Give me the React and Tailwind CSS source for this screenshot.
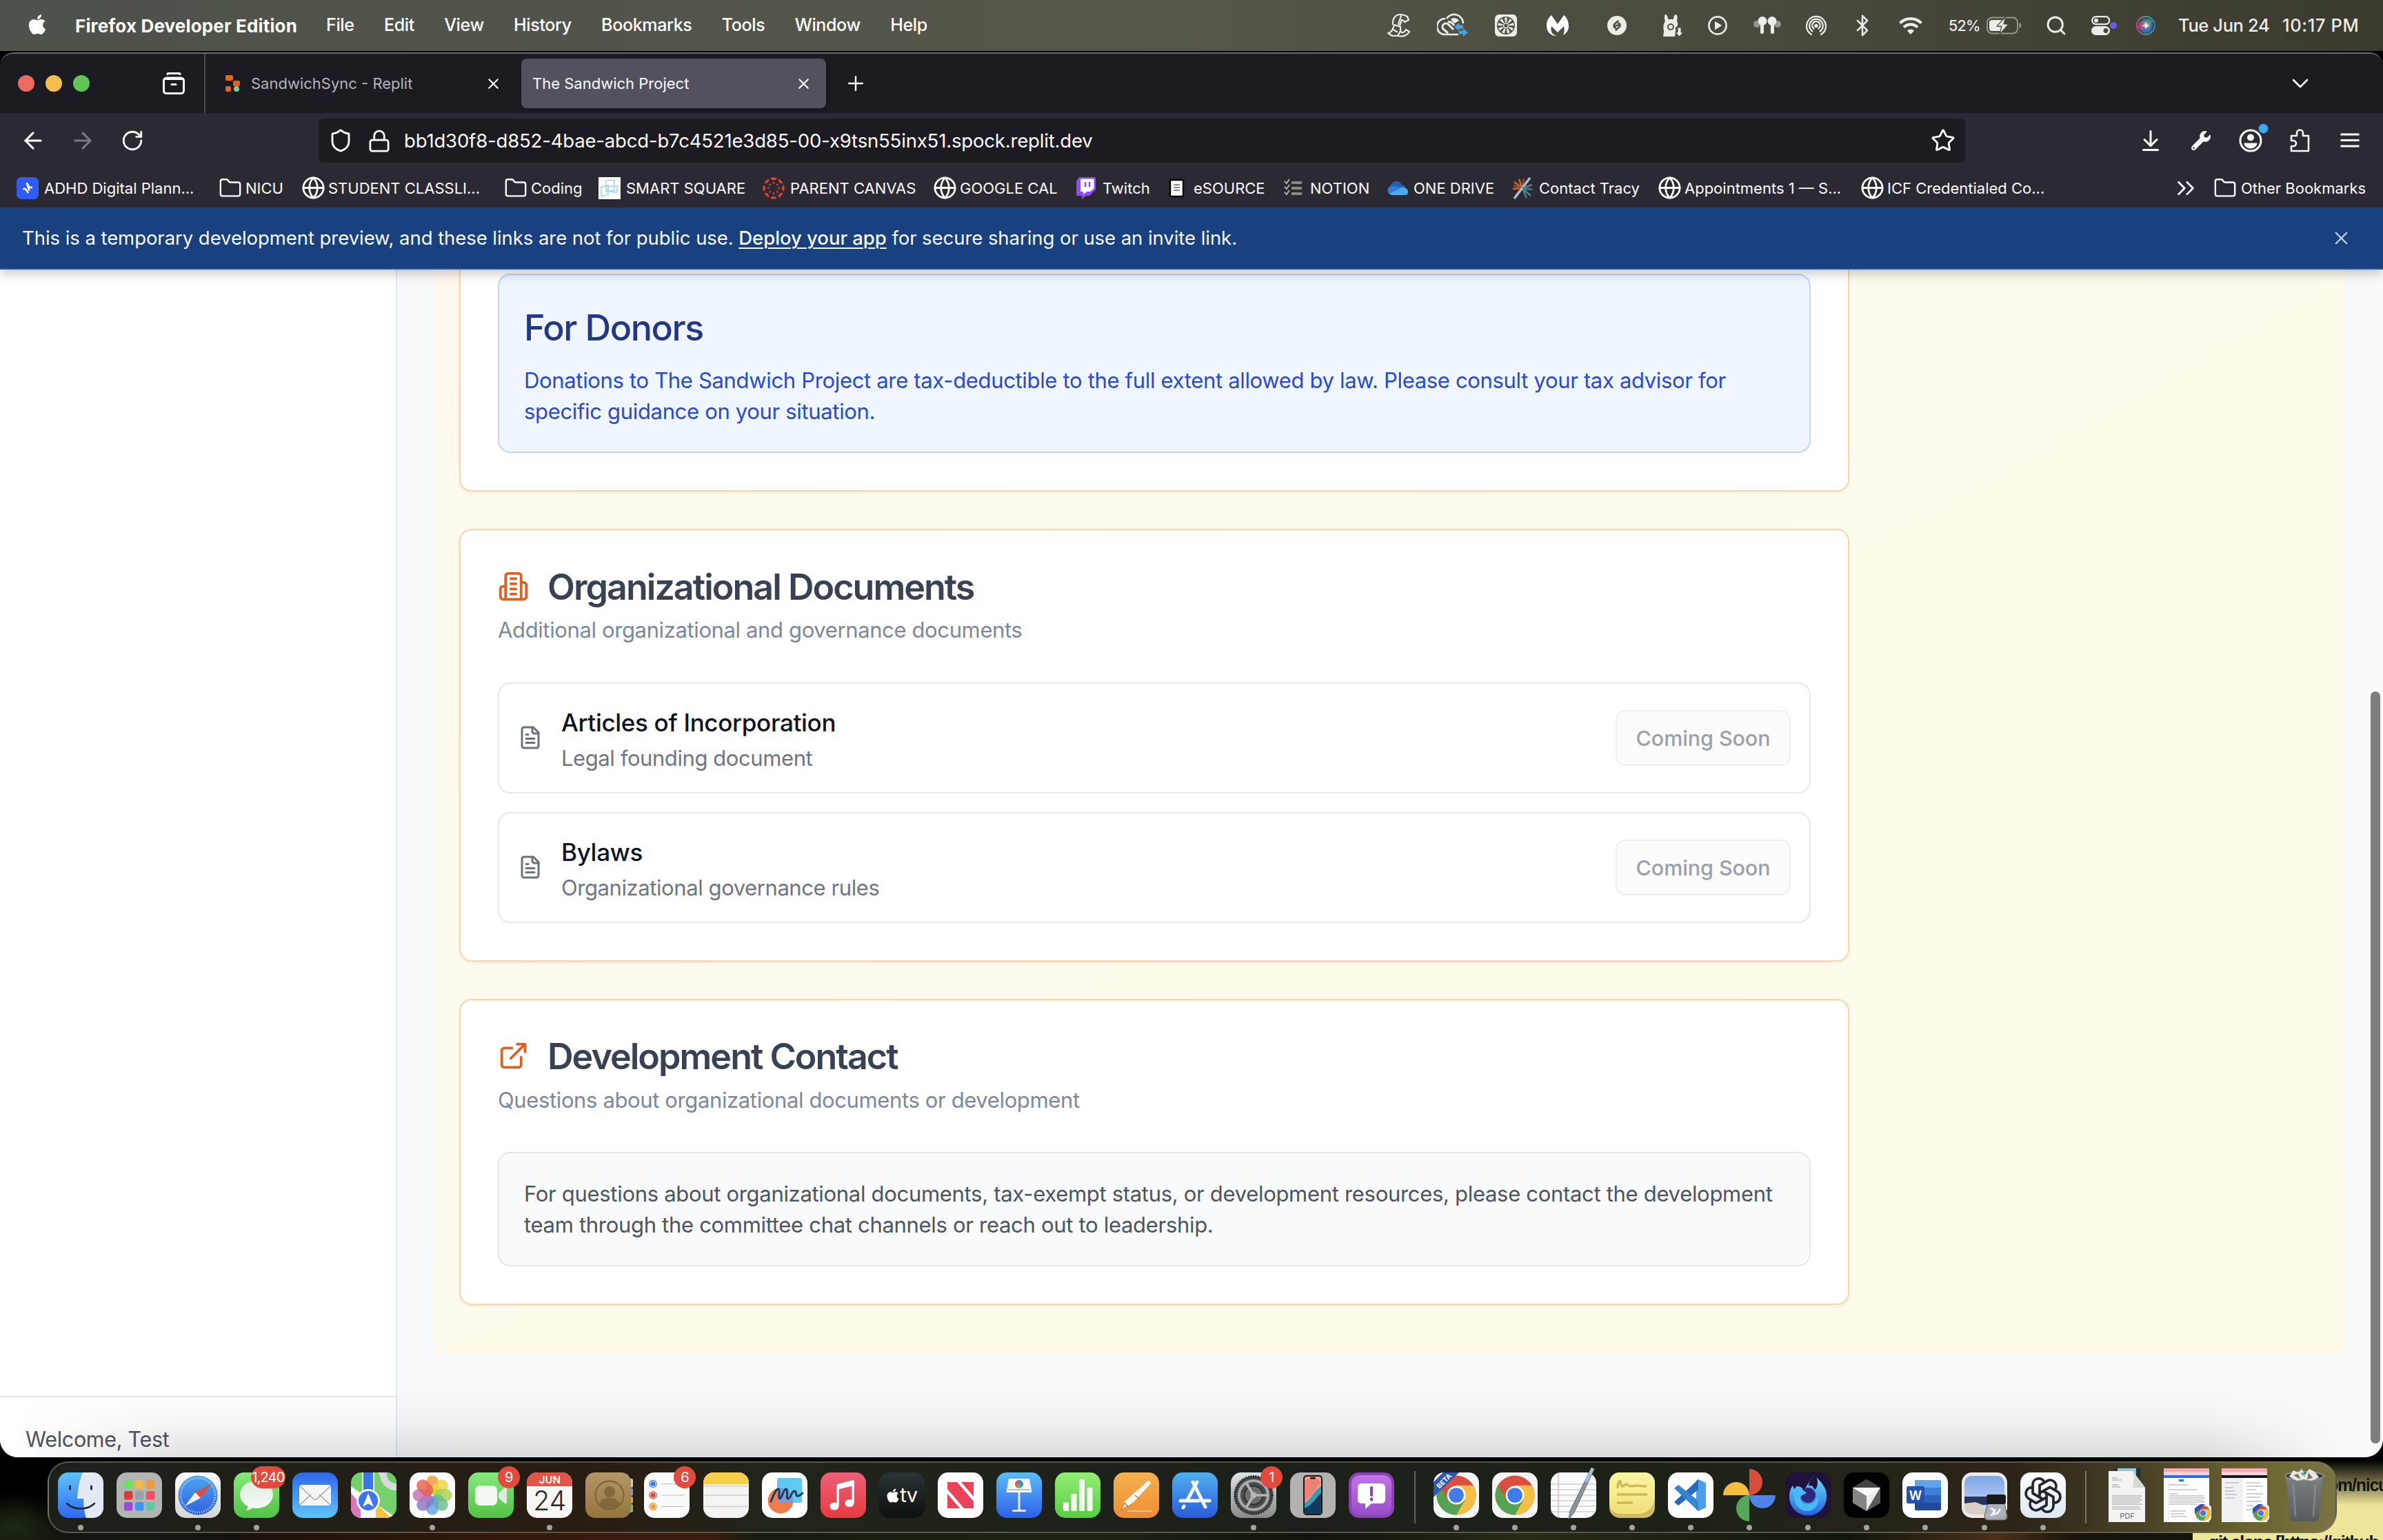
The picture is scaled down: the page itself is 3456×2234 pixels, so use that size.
import React from 'react';
import { ArrowLeft, ArrowRight, RotateCw, Shield, Lock, Star, ArrowDownToLine, Menu, ChevronDown, ChevronsRight, Folder, Globe, X, Plus, Bluetooth, Search } from 'lucide-react';
import { FaApple, FaWrench } from 'react-icons/fa';
import { TbBrandOpenai } from 'react-icons/tb';

/* ---------- Menu bar ---------- */

const menus = ['File', 'Edit', 'View', 'History', 'Bookmarks', 'Tools', 'Window', 'Help'];

function StatusIcons() {
  return (
    <div className="flex h-full w-[1445px] shrink-0 items-center text-[#ecece8]">
      <svg className="h-9 w-9 shrink-0" viewBox="0 0 36 36" fill="none" stroke="currentColor" strokeWidth="2.2" strokeLinecap="round" strokeLinejoin="round">
        <path d="M9 16C8 8 13 2 20 2c4 0 7 1 10 3l2 5-6 3c-1-2-2-3-4-3" />
        <path d="M21 4l-4 12M22 10l-3 8" />
        <path d="M11 17l9 3v6L16 33H8l-6-4c4 0 7-5 9-12z" />
        <path d="M9 24l6 3M20 26c2 4 6 2 8-2l5 3c-3 5-9 8-16 6" />
      </svg>
      <svg className="ml-[37px] h-9 w-[46px] shrink-0" viewBox="0 0 46 36" fill="none">
        <path d="M12 8a10 10 0 0 0-1 23h20M14 8a13 13 0 0 1 24 7" stroke="currentColor" strokeWidth="2.6" />
        <path d="M24 24l-8-8a5 5 0 0 0-7 7l7 6M16 13c4-1 7 2 9 5" stroke="currentColor" strokeWidth="3" />
        <path d="M20 9a8 8 0 0 1 12 2l-7 4z" fill="currentColor" />
        <path d="M25 20l7-6v3.500h6v5h-6v3.500zM45 28l-7-6v3.500h-6v5h6v3.500z" fill="#46a3dc" />
      </svg>
      <svg className="ml-[38px] h-8 w-8 shrink-0" viewBox="0 0 32 32">
        <rect width="32" height="32" rx="6" fill="currentColor" />
        <circle cx="16" cy="16" r="13" fill="#505245" />
        {[0, 40, 80, 120, 160, 200, 240, 280, 320].map((a) => (
          <path key={a} d="M15 11l-1-6.500h4l-1 6.500z" fill="currentColor" transform={`rotate(${a} 16 16)`} />
        ))}
        <circle cx="16" cy="16" r="3.500" fill="none" stroke="currentColor" strokeWidth="1.500" />
      </svg>
      <svg className="ml-[43px] h-8 w-8 shrink-0" viewBox="0 0 32 32" fill="#fff">
        <path d="M7 1l9 13 9-13c5 4 7 10 7 16s-3 10-8 13c2-5 2-9 1-13l-9 9-9-9c-2 7 1 13 9 14C6 32 0 25 0 16 0 10 2 5 7 1z" />
      </svg>
      <svg className="ml-[56px] h-7 w-7 shrink-0" viewBox="0 0 28 28">
        <circle cx="14" cy="14" r="14" fill="currentColor" />
        <path d="M15.500 7.500l-5 4.500c-2 2-1 5 1.500 5.500M12.500 20.500l5-4.500c2-2 1-5-1.500-5.500M11 15l6-2" fill="none" stroke="#505245" strokeWidth="2.500" strokeLinecap="round" />
      </svg>
      <svg className="ml-[52px] h-8 w-[30px] shrink-0" viewBox="0 0 30 32">
        <path d="M4 0c3 0 4 4 4 7h8c0-3 1-7 4-7 3 3 1 8 1 10 2 2 1 6 0 8h-2v6l-1 8H1c1-6 1-7 1-9-1-4-1-9 2-13C3 6 2 3 4 0z" fill="currentColor" />
        <circle cx="12" cy="18" r="4" fill="none" stroke="#505245" strokeWidth="2" />
        <path d="M22 19h5v7h3l-5.500 6-5.500-6h3z" fill="currentColor" stroke="#505245" strokeWidth="1" />
      </svg>
      <svg className="ml-[36px] h-7 w-7 shrink-0" viewBox="0 0 28 28">
        <circle cx="14" cy="14" r="12.600" fill="none" stroke="currentColor" strokeWidth="2.600" />
        <path d="M10.500 8.500v11l9-5.500z" fill="currentColor" stroke="currentColor" strokeLinejoin="round" />
      </svg>
      <svg className="ml-[38px] h-7 w-10 shrink-0" viewBox="0 0 40 28" fill="currentColor">
        <circle cx="5" cy="12" r="5" fill="#94958c" />
        <circle cx="35" cy="12" r="5" fill="#94958c" />
        <ellipse cx="13" cy="7.500" rx="6.500" ry="6.500" />
        <ellipse cx="27" cy="7.500" rx="6.500" ry="6.500" />
        <rect x="10" y="12" width="5" height="14" rx="2" />
        <rect x="25" y="12" width="5" height="14" rx="2" />
      </svg>
      <svg className="ml-[36px] h-[30px] w-[30px] shrink-0" viewBox="0 0 30 30" fill="none" stroke="currentColor" strokeWidth="2.200" strokeLinecap="round">
        <path d="M8 28a14 14 0 1 1 14 0" />
        <path d="M9.500 23.500a9.800 9.800 0 1 1 11 0" />
        <path d="M11.500 19.500a5.800 5.800 0 1 1 7 0" />
        <circle cx="15" cy="15.500" r="1.600" fill="currentColor" />
      </svg>
      <Bluetooth className="ml-[35px] h-[34px] w-[34px] shrink-0" strokeWidth={1.8} />
      <svg className="ml-[36px] h-[26px] w-[34px] shrink-0" viewBox="0 0 34 26" fill="none" stroke="currentColor" strokeWidth="4.200">
        <path d="M1.500 9.500a22 22 0 0 1 31 0" />
        <path d="M7 15.500a14 14 0 0 1 20 0" />
        <path d="M17 26l-5-5.500a7 7 0 0 1 10 0z" fill="currentColor" stroke="none" />
      </svg>
      <span className="ml-[38px] w-[47px] shrink-0 text-[21.500px] font-medium tracking-[-0.035em]">52%</span>
      <svg className="ml-[8px] h-[26px] w-[51px] shrink-0" viewBox="0 0 51 26">
        <rect x="1" y="1.500" width="44" height="23" rx="7" fill="none" stroke="#96968d" strokeWidth="2" />
        <path d="M47.500 9v8c2-.5 3-2 3-4s-1-3.500-3-4z" fill="#96968d" />
        <path d="M8 5h15l-7 10h5l-1 6H8a4 4 0 0 1-4-4V9a4 4 0 0 1 4-4z" fill="currentColor" />
        <path d="M28 0L15 14h7l-3 12 13-15h-7z" fill="currentColor" stroke="#484a3d" strokeWidth="1.200" />
      </svg>
      <Search className="ml-[34px] h-[32px] w-[32px] shrink-0" strokeWidth={2.2} />
      <svg className="ml-[35px] h-7 w-[38px] shrink-0" viewBox="0 0 38 28">
        <rect x="1.200" y="1.200" width="25" height="11" rx="5.500" fill="none" stroke="currentColor" strokeWidth="2.200" />
        <circle cx="7" cy="6.700" r="3" fill="currentColor" />
        <rect x="0" y="15" width="27" height="13" rx="6.500" fill="currentColor" />
        <circle cx="21" cy="21.500" r="3.400" fill="#47473a" />
        <circle cx="32" cy="14" r="5" fill="#615eea" />
      </svg>
      <svg className="ml-[27px] h-7 w-7 shrink-0" viewBox="0 0 28 28">
        <defs>
          <radialGradient id="siri"><stop offset="0" stopColor="#dfeef0" /><stop offset=".4" stopColor="#6f8f9c" /><stop offset="1" stopColor="#1d3247" /></radialGradient>
          <linearGradient id="siriRing" x1="0" x2="1"><stop offset="0" stopColor="#e2447c" /><stop offset=".5" stopColor="#4a7" /><stop offset="1" stopColor="#2c8ed0" /></linearGradient>
        </defs>
        <circle cx="14" cy="14" r="13" fill="url(#siri)" stroke="url(#siriRing)" strokeWidth="1.800" />
        <ellipse cx="8" cy="15" rx="5" ry="6" fill="#d93e78" opacity=".65" />
        <ellipse cx="15" cy="21" rx="8" ry="4" fill="#2f6fd8" opacity=".6" />
        <ellipse cx="19" cy="8" rx="5" ry="3.500" fill="#3aa87c" opacity=".55" />
        <path d="M14 9l1.500 4 4 1-4 1.500L14 19l-1.500-3.500-4-1.500 4-1z" fill="#fff" opacity=".85" />
      </svg>
      <span className="ml-[33px] w-[135px] shrink-0 whitespace-nowrap text-[25.500px] font-medium tracking-[-0.015em]">Tue Jun 24</span>
      <span className="ml-[16px] shrink-0 whitespace-nowrap text-[25.500px] font-medium tracking-[0.025em]">10:17 PM</span>
    </div>
  );
}

function MenuBar() {
  return (
    <header className="flex h-[74px] shrink-0 items-center bg-linear-to-r from-[#4d524a] via-[#56574a] to-[#3b3a2f] pl-[39px] text-[25px] font-medium text-white">
      <FaApple className="-mt-1 h-[33px] w-[30px] shrink-0" />
      <span className="ml-[40px] w-[321px] whitespace-nowrap text-[26px] font-bold tracking-[0.006em]">Firefox Developer Edition</span>
      <nav className="ml-[43px] flex flex-1 gap-[43.300px] tracking-[-0.014em]">
        {menus.map((m) => <span key={m}>{m}</span>)}
      </nav>
      <StatusIcons />
    </header>
  );
}

/* ---------- Browser chrome ---------- */

function TabStrip() {
  return (
    <div className="flex h-[86px] shrink-0 items-center bg-[#1c1b22] text-[22px] text-[#fbfbfe]">
      <div className="ml-[26px] flex gap-[16px]">
        <span className="h-6 w-6 rounded-full bg-[#ec6a5e]" />
        <span className="h-6 w-6 rounded-full bg-[#f4bf4f]" />
        <span className="h-6 w-6 rounded-full bg-[#61c554]" />
      </div>
      <svg className="ml-[106px] h-8 w-8" viewBox="0 0 32 32" fill="none" stroke="#fbfbfe" strokeWidth="3" strokeLinecap="round">
        <path d="M7 2.500c0-.7.500-1 1-1h16c.600 0 1 .3 1 1" />
        <rect x="1.500" y="8" width="29" height="22.500" rx="4" />
        <path d="M1.500 9.500h29" strokeLinecap="butt" />
        <path d="M13 17.500h6" />
      </svg>
      <span className="ml-[28px] h-full w-[2px] bg-[#4a4951]" />
      <div className="flex w-[458px] items-center pl-[29px] text-[#b4b4b9]">
        <svg className="h-6 w-[22px]" viewBox="0 0 22 24">
          <rect width="11" height="8" rx="2" fill="#f26207" /><rect x="11" y="8" width="10" height="8" rx="2" fill="#e2602a" />
          <rect y="16" width="8" height="8" rx="2" fill="#e2602a" /><circle cx="16" cy="20" r="4" fill="#7ed08a" />
        </svg>
        <span className="ml-[15px] flex-1 whitespace-nowrap">SandwichSync - Replit</span>
        <X className="mr-[28px] h-[25px] w-[25px] text-[#fbfbfe]" strokeWidth={2} />
      </div>
      <div className="flex h-[72px] w-[442px] items-center rounded-[8px] bg-[#52515e] pl-[16px] shadow-md">
        <span className="flex-1 whitespace-nowrap">The Sandwich Project</span>
        <X className="mr-[20px] h-[25px] w-[25px]" strokeWidth={2} />
      </div>
      <Plus className="ml-[26px] h-[34px] w-[34px]" strokeWidth={1.7} />
      <ChevronDown className="mr-[100px] ml-auto h-[40px] w-[40px]" strokeWidth={1.6} />
    </div>
  );
}

function NavBar() {
  return (
    <div className="flex h-[80px] shrink-0 items-center bg-[#2b2a33] text-[#fbfbfe]">
      <ArrowLeft className="ml-[29px] h-[38px] w-[38px]" strokeWidth={1.9} />
      <ArrowRight className="ml-[34px] h-[38px] w-[38px] text-[#7b7a81]" strokeWidth={1.9} />
      <RotateCw className="ml-[36px] h-[34px] w-[34px]" strokeWidth={2} />
      <div className="ml-[253px] flex h-[64px] w-[2388px] items-center rounded-[8px] bg-[#1c1b22]">
        <Shield className="ml-[14px] h-[36px] w-[36px]" strokeWidth={1.9} />
        <Lock className="ml-[20px] h-[35px] w-[36px]" strokeWidth={1.9} />
        <span className="ml-[18px] flex-1 whitespace-nowrap pt-[2px] text-[27.500px] tracking-[-0.006em]">bb1d30f8-d852-4bae-abcd-b7c4521e3d85-00-x9tsn55inx51.spock.replit.dev</span>
        <Star className="mr-[14px] h-[36px] w-[36px]" strokeWidth={1.9} />
      </div>
      <ArrowDownToLine className="ml-[251px] h-[36px] w-[36px]" strokeWidth={2} />
      <FaWrench className="ml-[41px] h-[28px] w-[28px] -scale-x-100 rotate-90" />
      <span className="relative ml-[41px]">
        <svg className="h-[34px] w-[34px]" viewBox="0 0 34 34" fill="none">
          <circle cx="17" cy="17" r="15" stroke="#fbfbfe" strokeWidth="3" />
          <circle cx="17" cy="12.500" r="5" fill="#fbfbfe" /><path d="M7.500 20.500h19c0 4-4 8-9.500 8s-9.500-4-9.500-8z" fill="#fbfbfe" />
        </svg>
        <span className="absolute -top-[8px] -right-[9px] h-[15px] w-[15px] rounded-full border border-[#1d5f8a] bg-[#45a5f5]" />
      </span>
      <svg className="ml-[40px] h-[34px] w-[30px]" viewBox="0 0 30 34" fill="none" stroke="#fbfbfe" strokeWidth="2.600" strokeLinejoin="round">
        <path d="M2 10h8V6a4.500 4.500 0 0 1 9 0v4h8v22H2v-7h3a4 4 0 0 0 0-8H2z" />
      </svg>
      <svg className="ml-[42px] h-[30px] w-[30px]" viewBox="0 0 30 30" fill="none" stroke="#fbfbfe" strokeWidth="3">
        <path d="M1.500 6h27M1.500 14.500h27M1.500 23h27" />
      </svg>
    </div>
  );
}

const FolderIcon = () => <Folder className="h-[34px] w-[34px] shrink-0 translate-x-[2px]" strokeWidth={1.7} />;
const GlobeIcon = () => <Globe className="h-[35px] w-[35px] shrink-0 translate-x-[2px]" strokeWidth={1.9} />;

const bookmarks = [
  ['w-[292px]', 'ADHD Digital Plann...', <svg className="h-8 w-8" viewBox="0 0 32 32"><rect width="32" height="32" rx="7" fill="#2f5bf6" /><path d="M15 8c0 5 3 7 3 12M9 17h4l4 6M23 15h-4l-4-6" stroke="#fff" strokeWidth="2.400" fill="none" /></svg>],
  ['w-[120px]', 'NICU', <FolderIcon />],
  ['w-[294px]', 'STUDENT CLASSLI...', <GlobeIcon />],
  ['w-[138px]', 'Coding', <FolderIcon />],
  ['w-[238px]', 'SMART SQUARE', <svg className="h-8 w-8" viewBox="0 0 32 32"><rect width="32" height="32" fill="#fff" /><path d="M11 5l12-1v15l-12 2zM4 14l10-2v13l-10 3zM14 13h14l-2 9-13-2z" stroke="#a3d3f2" strokeWidth="1.600" fill="none" /></svg>],
  ['w-[246px]', 'PARENT CANVAS', (
    <svg className="h-8 w-8" viewBox="0 0 32 32" fill="#d9422f">
      {[0, 45, 90, 135, 180, 225, 270, 315].map((a) => (
        <g key={a} transform={`rotate(${a} 16 16)`}><path d="M11.500 1a16 16 0 0 1 9 0 4.700 4.700 0 0 1-9 0z" /><circle cx="16" cy="8.500" r="1.400" /></g>
      ))}
    </svg>
  )],
  ['w-[207px]', 'GOOGLE CAL', <GlobeIcon />],
  ['w-[132px]', 'Twitch', <svg className="h-8 w-8" viewBox="0 0 32 32"><path d="M6 0h24v18l-9 9h-5l-6 5v-5H2V6z" fill="#8d4bff" /><path d="M8 2.500h19.500v14L22 21h-5l-5 4v-4H8z" fill="#fff" /><path d="M15 7v7M21 7v7" stroke="#8d4bff" strokeWidth="2.500" /></svg>],
  ['w-[169px]', 'eSOURCE', <svg className="h-8 w-8" viewBox="0 0 32 32"><rect x="6" y="4" width="19" height="24" fill="#fff" stroke="#000" strokeWidth="2.500" /><path d="M11 11h9M11 15h9M11 19h9" stroke="#888" strokeWidth="2" /></svg>],
  ['w-[150px]', 'NOTION', <svg className="h-8 w-8" viewBox="0 0 32 32" fill="none" stroke="#8b8a80" strokeWidth="4"><path d="M13 8h15M13 16h15M13 24h15" /><path d="M3 6l3 3 4-6M3 14l3 3 4-6M3 22l3 3 4-6" strokeWidth="2" stroke="#b3af9c" /></svg>],
  ['w-[182px]', 'ONE DRIVE', <svg className="h-8 w-8" viewBox="0 0 32 32"><path d="M6 14a9 9 0 0 1 17-3 8 8 0 0 1 3 14H7A6.500 6.500 0 0 1 6 13z" fill="#1f62b8" /><path d="M7 25.500a6.500 6.500 0 0 1 1-12.500l13 2 5 10.500z" fill="#2d7fd8" /><path d="M5 24l16-8c3-3 11 0 11 5s-3 5-5 5H8z" fill="#4ba9ec" /></svg>],
  ['w-[211px]', 'Contact Tracy', <svg className="h-8 w-8" viewBox="0 0 32 32" fill="none" strokeWidth="2.600"><path d="M16 16L4 7M16 16L2 17M16 16L11 3" stroke="#c96a2a" /><path d="M16 16L18 2M16 16L6 26M16 16L3 12" stroke="#9a4a28" /><path d="M16 16l12 11M16 16l6 14M16 16l14 2" stroke="#4f7f86" /><path d="M27 1L4 31" stroke="#a9bfd6" strokeWidth="3.500" /><path d="M16 16l14-5" stroke="#5c7d96" /></svg>],
  ['w-[294px]', 'Appointments 1 — S...', <GlobeIcon />],
  ['w-[290px]', 'ICF Credentialed Co...', <GlobeIcon />],
];

function BookmarkBar() {
  return (
    <div className="flex h-[57px] shrink-0 items-center bg-[#2b2a33] pl-[24px] text-[22px] text-[#fbfbfe]">
      {bookmarks.map(([w, label, icon]) => (
        <div key={label} className={`flex shrink-0 items-center gap-[8px] ${w}`}>
          <span className="flex h-8 w-8 shrink-0 items-center justify-center">{icon}</span>
          <span className="whitespace-nowrap pt-[1px]">{label}</span>
        </div>
      ))}
      <ChevronsRight className="ml-auto h-[42px] w-[42px]" strokeWidth={1.5} />
      <div className="ml-[18px] flex w-[247px] shrink-0 items-center gap-[9px]">
        <span className="flex h-8 w-8 items-center justify-center"><FolderIcon /></span>
        <span className="whitespace-nowrap pt-[1px]">Other Bookmarks</span>
      </div>
    </div>
  );
}

function PreviewBanner() {
  return (
    <div className="relative z-10 flex h-[90px] shrink-0 items-center border-b-2 border-[#2a5596] bg-[#19407f] pl-[32px] text-[27.500px] tracking-[-0.002em] text-[#f5f9fc] shadow-[0_6px_16px_rgba(0,0,0,0.22)]">
      <p className="whitespace-pre pt-[2px]">This is a temporary development preview, and these links are not for public use. <span className="font-medium tracking-[-0.002em] underline decoration-2 underline-offset-4">Deploy your app</span> for secure sharing or use an invite link.</p>
      <X className="mr-[45px] ml-auto h-[31px] w-[31px] text-[#c5d3e6]" strokeWidth={1.8} />
    </div>
  );
}

/* ---------- Page ---------- */

function BuildingIcon() {
  return (
    <svg className="h-[45px] w-[45px] text-[#e06024]" viewBox="0 0 24 24" fill="none" stroke="currentColor" strokeWidth="2" strokeLinecap="round" strokeLinejoin="round">
      <path d="M6 22V4a2 2 0 0 1 2-2h8a2 2 0 0 1 2 2v18Z" />
      <path d="M6 12H4a2 2 0 0 0-2 2v6a2 2 0 0 0 2 2h2" />
      <path d="M18 9h2a2 2 0 0 1 2 2v9a2 2 0 0 1-2 2h-2" />
      <path d="M10 6h4M10 10h4M10 14h4M10 18h4" />
    </svg>
  );
}

function ExternalIcon() {
  return (
    <svg className="h-[45px] w-[45px] text-[#e06024]" viewBox="0 0 24 24" fill="none" stroke="currentColor" strokeWidth="2" strokeLinecap="round" strokeLinejoin="round">
      <path d="M15 3h6v6M10 14 21 3" />
      <path d="M18 13v6a2 2 0 0 1-2 2H5a2 2 0 0 1-2-2V8a2 2 0 0 1 2-2h6" />
    </svg>
  );
}

function FileIcon() {
  return (
    <svg className="h-[36px] w-[36px] text-[#6b7280]" viewBox="0 0 24 24" fill="none" stroke="currentColor" strokeWidth="2" strokeLinecap="round" strokeLinejoin="round">
      <path d="M15 2H6a2 2 0 0 0-2 2v16a2 2 0 0 0 2 2h12a2 2 0 0 0 2-2V7Z" />
      <path d="M14 2v4a2 2 0 0 0 2 2h4M10 9H8M16 13H8M16 17H8" />
    </svg>
  );
}

function Card({ icon, title, subtitle, children }) {
  return (
    <section className="mt-[54px] rounded-[18px] border-2 border-[#fad7a6] bg-white p-[54px] shadow-[0_2px_4px_rgba(0,0,0,0.06)]">
      <div className="flex h-[54px] items-center gap-[27px]">
        {icon}
        <h3 className="pt-[3px] text-[52px] leading-[54px] font-semibold tracking-[-0.038em] text-[#374254]">{title}</h3>
      </div>
      <p className="mt-[14px] mb-[53.500px] text-[31px] leading-[45px] tracking-[-0.012em] text-[#7b899b]">{subtitle}</p>
      {children}
    </section>
  );
}

function DocumentRow({ name, detail, className = '' }) {
  return (
    <div className={`flex h-[161px] items-center rounded-[18px] border-2 border-[#e5e7eb] px-[27px] ${className}`}>
      <FileIcon />
      <div className="ml-[27px] flex-1">
        <h4 className="text-[35px] leading-[58px] font-medium tracking-[-0.009em] text-[#0c1222]">{name}</h4>
        <p className="text-[31px] leading-[45px] tracking-[-0.0135em] text-[#6f7684]">{detail}</p>
      </div>
      <button className="flex h-[81px] w-[254px] items-center justify-center rounded-[14px] border-2 border-[#efeff0] bg-[#fbfbfb] pt-[1px] text-[30.500px] font-medium tracking-[-0.003em] text-[#99a0ab]">Coming Soon</button>
    </div>
  );
}

function Page() {
  return (
    <div className="relative flex min-h-0 flex-1 overflow-hidden bg-[#f8fafc]">
      <aside className="flex w-[576px] shrink-0 flex-col justify-end border-r-2 border-[#e2e8f0] bg-white">
        <div className="h-[89px] border-t-2 border-[#e2e8f0] pt-[38px] pl-[37px] text-[30.500px] leading-[45px] tracking-[-0.01em] text-[#4a5567]">Welcome, Test</div>
      </aside>
      <main className="ml-[54px] h-[1572px] w-[2772px] bg-linear-to-br from-[#fff8ee] from-5% via-[#fefaed] via-45% to-[#fffbeb] px-[36px]">
        <div className="w-[2016px]">
          <section className="h-[322px] rounded-b-[18px] border-2 border-t-0 border-[#fad7a6] bg-white px-[54px] pt-[6px] shadow-[0_2px_4px_rgba(0,0,0,0.06)]">
            <div className="h-[260px] rounded-[18px] border-2 border-[#bfd6f8] bg-[#eff6ff] px-[36px] pt-[36px]">
              <h4 className="mb-[13px] text-[52px] leading-[81px] font-medium tracking-[-0.027em] text-[#233786]">For Donors</h4>
              <p className="text-[31px] leading-[45px] tracking-[-0.0107em] text-[#2b4bcb]">
                Donations to The Sandwich Project are tax-deductible to the full extent allowed by law. Please consult your tax advisor for<br />specific guidance on your situation.
              </p>
            </div>
          </section>
          <Card icon={<BuildingIcon />} title="Organizational Documents" subtitle="Additional organizational and governance documents">
            <DocumentRow name="Articles of Incorporation" detail="Legal founding document" />
            <DocumentRow name="Bylaws" detail="Organizational governance rules" className="mt-[27px]" />
          </Card>
          <Card icon={<ExternalIcon />} title="Development Contact" subtitle="Questions about organizational documents or development">
            <p className="h-[166px] rounded-[18px] border-2 border-[#e5e7eb] bg-[#f9fafb] p-[36px] text-[31px] leading-[45px] tracking-[-0.0099em] text-[#4b5563]">
              For questions about organizational documents, tax-exempt status, or development resources, please contact the development<br />team through the committee chat channels or reach out to leadership.
            </p>
          </Card>
        </div>
      </main>
      <div className="absolute inset-x-0 bottom-0 h-[100px] bg-linear-to-b from-transparent via-black/4 to-black/12 mask-[linear-gradient(to_right,transparent_20px,black_260px,black_3200px,transparent_3400px)]" />
      <div className="absolute right-[4px] bottom-[20px] h-[1091px] w-[14px] rounded-full bg-[#7d7e80]" />
    </div>
  );
}

/* ---------- Dock ---------- */

function Tile({ fill, children }) {
  return (
    <svg className="h-[66px] w-[66px] shrink-0 overflow-visible" viewBox="0 0 66 66">
      {fill && <rect width="66" height="66" rx="15" fill={fill} />}
      {children}
    </svg>
  );
}

function Gradients() {
  const g = [
    ['gFinder', '#5cc4f8', '#3069f0'], ['gSilver', '#fdfdfd', '#d5d5d5'], ['gBlue', '#4aa5ee', '#2f62e0'], ['gGreen', '#84ea7c', '#54c144'],
    ['gMail', '#2f67ea', '#5ec4f8'], ['gTan', '#b39766', '#94753f'], ['gMusic', '#ec6078', '#e63b40'], ['gBubble', '#dfeedf', '#f6faf6'],
    ['gKeynote', '#5bbcf9', '#2e61e8'], ['gNumbers', '#93ee74', '#5bcb42'], ['gPages', '#f4b24c', '#ef8c36'], ['gStore', '#4fb0ee', '#2b5bdb'],
    ['gSettings', '#dbe4e8', '#8b8a87'], ['gPurple', '#c076e6', '#9a4cc8'], ['gSticky', '#fcf5a2', '#efe07c'],
    ['gFox', '#6fe3fb', '#2463dd'], ['gSky', '#7fa6e8', '#c9dbf5'], ['gCan', '#7d8082', '#585b5d'],
  ];
  return (
    <svg className="absolute h-0 w-0">
      <defs>
        {g.map(([id, a, b]) => (
          <linearGradient key={id} id={id} x1="0" y1="0" x2="0" y2="1"><stop offset="0" stopColor={a} /><stop offset="1" stopColor={b} /></linearGradient>
        ))}
        <clipPath id="tile"><rect width="66" height="66" rx="15" /></clipPath>
      </defs>
    </svg>
  );
}

function ChromeMark({ cx = 33, cy = 33, r = 28.5 }) {
  return (
    <g transform={`translate(${cx} ${cy}) scale(${r / 28.5})`}>
      <circle r="28.500" fill="#d94f3f" />
      <path d="M24.700-14.200A28.500 28.500 0 0 1 0 28.500L12.300 7.100 0-14.200z" fill="#f3be42" />
      <path d="M0 28.500A28.500 28.500 0 0 1-24.700-14.200L-12.300 7.100 0 14.200 12.300 7.100z" fill="#52a353" />
      <circle r="13.500" fill="#fff" /><circle r="10.800" fill="#3f7bea" />
    </g>
  );
}

function Badge({ children, wide }) {
  return (
    <span className={`absolute -top-[9px] -right-[9px] flex h-8 items-center justify-center rounded-full bg-[#e24b3c] text-[20px] leading-none text-white ${wide ? 'w-[50px] text-[18.500px] tracking-[-0.04em]' : 'w-8'}`}>{children}</span>
  );
}

const Finder = () => (
  <Tile fill="url(#gFinder)">
    <path d="M36 0C30 14 29 26 28 38h9c0 10 1 20 4 28h10a15 15 0 0 0 15-15V15A15 15 0 0 0 51 0z" fill="#e3e9f2" />
    <path d="M17.500 20v4M48.500 20v4" stroke="#1d2a3a" strokeWidth="3" strokeLinecap="round" />
    <path d="M13 45c10 10 30 10 40 0" stroke="#1d2a3a" strokeWidth="2.500" fill="none" strokeLinecap="round" />
  </Tile>
);
const Launchpad = () => (
  <Tile fill="#b3b5b4">
    {['#6fe05b', '#f3bd43', '#ec9a3a', '#d93a32', '#9aa1a6', '#f04f62', '#9b4bd0', '#3b95f5', '#63c9a3'].map((c, i) => (
      <rect key={c} x={11 + (i % 3) * 16} y={11 + Math.floor(i / 3) * 16} width="12.500" height="12.500" rx="3" fill={c} />
    ))}
  </Tile>
);
const Safari = () => (
  <Tile fill="url(#gSilver)">
    <circle cx="33" cy="33" r="28.500" fill="url(#gBlue)" />
    <circle cx="33" cy="33" r="25" fill="none" stroke="#d6e8fb" strokeWidth="3" strokeDasharray="1 2.270" />
    <path d="M53 16L37 37l-8-8z" fill="#e3493c" /><path d="M14 49l15-20 8 8z" fill="#f2f2f2" />
  </Tile>
);
const Messages = () => (
  <Tile fill="url(#gGreen)">
    <ellipse cx="33" cy="32" rx="24" ry="20" fill="url(#gBubble)" /><path d="M21 46c0 4-1 7-4 9 5 0 9-2 11-5z" fill="#f2f7f2" />
  </Tile>
);
const Mail = () => (
  <Tile fill="url(#gMail)">
    <rect x="10" y="18" width="46" height="30" rx="4" fill="#f4f4f4" />
    <path d="M11 47l16-15M55 47L39 32M11 20l19 18q3 3 6 0l19-18" fill="none" stroke="#a5a7aa" strokeWidth="1.500" />
  </Tile>
);
const Maps = () => (
  <Tile>
    <g clipPath="url(#tile)">
      <rect width="66" height="66" fill="#76d06b" />
      <path d="M40 0h30v26a24 24 0 0 1-26-14z" fill="#d7d9dc" /><path d="M52 0a14 14 0 0 0 14 16V0z" fill="#6ccc62" />
      <path d="M0 20l66 46v10H0z" fill="#f4f5f7" /><path d="M0 30v36h14V46z" fill="#d879bd" /><path d="M36 66V44l22 22z" fill="#f3c544" />
      <path d="M16 0h18v66H16z" fill="#f4f5f7" /><path d="M18 0h14v34H18z" fill="#3675ee" />
    </g>
    <circle cx="25" cy="41" r="17" fill="#f4f5f7" /><circle cx="25" cy="41" r="14" fill="#3a77ef" /><path d="M25 30l8 20-8-5-8 5z" fill="#fff" />
  </Tile>
);
const Photos = () => (
  <Tile fill="#fdfdfd">
    {['#f19a38', '#e8d73c', '#a6cf4d', '#68bd8b', '#5fa4dd', '#8678c4', '#c173b4', '#e6604d'].map((c, i) => (
      <rect key={c} x="24" y="4.500" width="18" height="27" rx="9" fill={c} opacity=".82" transform={`rotate(${i * 45} 33 33)`} />
    ))}
  </Tile>
);
const FaceTime = () => (
  <Tile fill="url(#gGreen)"><rect x="10" y="19" width="32" height="29" rx="7" fill="#f1f6f1" /><path d="M44 30l9-8q3-1 3 2v19q0 3-3 2l-9-8z" fill="#dcebdc" /></Tile>
);
const Calendar = () => (
  <span className="flex h-[66px] w-[66px] shrink-0 flex-col overflow-hidden rounded-[15px] bg-[#f7f7f6] text-center">
    <span className="h-[20px] bg-[#e25549] pt-[2px] text-[15px] leading-[18px] font-semibold text-white">JUN</span>
    <span className="text-[39px] leading-[42px] font-light text-[#2a2a2a]">24</span>
  </span>
);
const Contacts = () => (
  <Tile>
    <rect x="60" y="9" width="9" height="13" rx="2" fill="#c9c9c9" /><rect x="60" y="23" width="9" height="11" rx="2" fill="#5aa5e4" /><rect x="60" y="35" width="9" height="10" rx="2" fill="#ef9b3b" /><rect x="60" y="46" width="9" height="12" rx="2" fill="#66cf58" />
    <rect width="66" height="66" rx="14" fill="url(#gTan)" />
    <circle cx="35" cy="33" r="20.500" fill="none" stroke="#7d6234" strokeWidth="1.800" /><circle cx="35" cy="28" r="8" fill="#7d6234" opacity=".8" /><path d="M20 46c3-7 8-9 15-9s12 2 15 9a20 20 0 0 1-30 0z" fill="#7d6234" opacity=".8" />
  </Tile>
);
const Reminders = () => (
  <Tile fill="#fafafa">
    {[['#3478f6', 16.5], ['#e2473a', 33], ['#ee9a34', 49.5]].map(([c, y]) => (
      <g key={c}><circle cx="13" cy={y} r="5.200" fill="none" stroke={c} strokeWidth="1.200" /><circle cx="13" cy={y} r="3.600" fill={c} /><path d={`M25 ${y}h34`} stroke="#bcbcbc" strokeWidth="1.200" /></g>
    ))}
  </Tile>
);
const Notes = () => (
  <Tile>
    <g clipPath="url(#tile)"><rect width="66" height="66" fill="#f5f4f2" /><rect width="66" height="17" fill="#f7d04a" /><path d="M0 20h66" stroke="#a9a9a5" strokeWidth="1.500" strokeDasharray="1.500 1.500" /><path d="M0 33h66M0 49.500h66" stroke="#d0cfcc" strokeWidth="1.300" /></g>
  </Tile>
);
const Freeform = () => (
  <Tile fill="#fff">
    <circle cx="27" cy="41" r="18.500" fill="#ef7c4c" /><rect x="22" y="8" width="36" height="36" rx="3" fill="#5fc9f2" /><path d="M22 23a19 19 0 0 1 23 21H22z" fill="#7f9bd0" />
    <path d="M13 42c4-10 8-19 11-18s-1 14 2 14 5-14 9-14-1 14 3 14 5-11 9-11 1 6 4 7 5-2 8-4" fill="none" stroke="#173c5f" strokeWidth="3" strokeLinecap="round" />
  </Tile>
);
const Music = () => (
  <Tile fill="url(#gMusic)"><path d="M25 49V19l22-6v31" fill="none" stroke="#fff" strokeWidth="3.500" /><path d="M24 17l24-6v8l-24 6z" fill="#fff" /><ellipse cx="20" cy="49" rx="6.500" ry="5.500" fill="#fff" /><ellipse cx="42" cy="44.500" rx="6.500" ry="5.500" fill="#fff" /></Tile>
);
const Tv = () => (
  <span className="flex h-[66px] w-[66px] shrink-0 items-center justify-center rounded-[15px] bg-linear-to-b from-[#293636] to-[#0c1012] text-[29px] leading-none text-white">
    <FaApple className="h-[23px] w-[20px]" /><span className="-mt-[1px] tracking-[-0.02em]">tv</span>
  </span>
);
const News = () => (
  <Tile fill="#fff"><path d="M14 14h14l24 28v10H38L14 24z" fill="#ea4259" /><path d="M34 14h18v21zM14 31v21h18z" fill="#ea4259" /></Tile>
);
const Keynote = () => (
  <Tile fill="url(#gKeynote)"><path d="M18 9h30l3.500 20h-37z" fill="#f5f7fa" /><path d="M17 25h32" stroke="#a3b2c2" strokeWidth="1.500" /><circle cx="33" cy="17" r="6" fill="#5fb65a" /><path d="M33 17v-6a6 6 0 0 1 5 9z" fill="#3f87e8" /><path d="M33 17l-5 3a6 6 0 0 1 5-9z" fill="#e9594e" /><path d="M33 29v26" stroke="#e7ecf2" strokeWidth="3" /><rect x="23" y="54" width="20" height="3" rx="1" fill="#dfe5ec" /></Tile>
);
const Numbers = () => (
  <Tile fill="url(#gNumbers)">{[[12, 43], [23.5, 31], [35, 10], [46.5, 22]].map(([x, y]) => <rect key={x} x={x} y={y} width="8" height={56 - y} rx="1.500" fill="#f3f8f2" />)}</Tile>
);
const Pages = () => (
  <Tile fill="url(#gPages)"><path d="M20 56h36" stroke="#f7c68f" strokeWidth="2" /><path d="M50 12q4 0 4 4L30 42 12 55l-2 1 6-14z" fill="#f6f4f1" /><path d="M31 33l6 5M11 55l5-11 5 5z" stroke="#a87a4b" strokeWidth="1.200" fill="#e3ddd6" /></Tile>
);
const AppStore = () => (
  <Tile fill="url(#gStore)"><g stroke="#f7fafd" strokeWidth="5" strokeLinecap="round"><path d="M30 14l18 36M36 14L22 40M12 41h26M43 41h11M17 49l-1 2" /></g></Tile>
);
const Settings = () => (
  <Tile fill="url(#gSettings)">
    <circle cx="33" cy="33" r="28" fill="#4a4c4d" /><circle cx="33" cy="33" r="27" fill="none" stroke="#2c2d2e" strokeWidth="4" strokeDasharray="1.800 1.600" />
    <circle cx="33" cy="33" r="21" fill="none" stroke="#a7aaab" strokeWidth="4" /><circle cx="33" cy="33" r="13.500" fill="#6a6c6d" stroke="#2f3031" strokeWidth="2" />
    <path d="M33 33h20M33 33L23 16M33 33L23 50" stroke="#b4b7b8" strokeWidth="3.500" /><circle cx="33" cy="33" r="4.500" fill="#b4b7b8" />
  </Tile>
);
const IPhone = () => (
  <Tile fill="#b2b2b1"><rect x="19" y="4" width="28" height="58" rx="5" fill="#14181c" /><rect x="21" y="6" width="24" height="54" rx="3.500" fill="#f2a28e" /><path d="M21 12L34 6 45 14C38 22 32 34 21 42z" fill="#ee8078" /><path d="M21 44C32 38 34 26 45 20v37q0 3-3 3H24q-3 0-3-3z" fill="#3d9ab5" /><path d="M21 52C34 46 36 38 45 30v27q0 3-3 3H24q-3 0-3-3z" fill="#123a5c" /><rect x="29" y="7" width="8" height="2.500" rx="1.200" fill="#14181c" /></Tile>
);
const Feedback = () => (
  <Tile fill="#8a42b4"><rect x="4" y="4" width="58" height="58" rx="12" fill="url(#gPurple)" /><path d="M19 16h28q6 0 6 6v17q0 6-6 6H33l-9 8v-8h-5q-6 0-6-6V22q0-6 6-6z" fill="#fff" /><path d="M33 22v11" stroke="#8a42b4" strokeWidth="4" strokeLinecap="round" /><circle cx="33" cy="39" r="2.400" fill="#8a42b4" /></Tile>
);
const ChromeBeta = () => (
  <Tile fill="#f4f4f4">
    <ChromeMark />
    <g clipPath="url(#tile)"><path d="M0 14L14 0h23L0 36z" fill="#2d56b4" /></g>
    <text transform="translate(8.500 24) rotate(-45)" fill="#fff" fontSize="10" fontWeight="700" fontFamily="Inter, sans-serif">BETA</text>
  </Tile>
);
const Chrome = () => <Tile fill="#f4f4f4"><ChromeMark /></Tile>;
const TextEdit = () => (
  <Tile fill="#fbfbfb"><path d="M0 17h66M0 25h66M0 33h66M0 41h66M0 49h66M0 57h66" stroke="#bcbcbc" strokeWidth="1.200" /><path d="M11 0v66" stroke="#ef9e9e" strokeWidth="1" /><path d="M59-7l4 2-29 63-8 10 2-12z" fill="#8c959d" stroke="#5d666e" strokeWidth="1" /><path d="M59-7l4 2-10 20-4-2z" fill="#a4bfd8" /></Tile>
);
const Stickies = () => (
  <Tile fill="#cdbb63"><path d="M15 0h36a15 15 0 0 1 15 15v22C64 52 56 58 44 60H15A15 15 0 0 1 0 45V15A15 15 0 0 1 15 0z" fill="url(#gSticky)" /><path d="M12 23c0-8 3-12 4-10s1 9 4 7 3-4 6-2 3 2 6 2 4-1 8-1 8 1 14 1M11 32h44M11 44h23" stroke="#cdbb55" strokeWidth="3.500" fill="none" /></Tile>
);
const VSCode = () => (
  <Tile fill="#fff"><path d="M44 10l11 5v36l-11 5-3-2V12z" fill="#4a9fe8" /><path d="M44 10v15L15 48l-6-5z" fill="#2a6bb8" /><path d="M9 23l6-5 29 23v15z" fill="#3585d3" /></Tile>
);
const GooglePhotos = () => (
  <Tile><path d="M33-5a19 19 0 0 1 0 38z" fill="#d94f3f" /><path d="M71 33a19 19 0 0 1-38 0z" fill="#4f82ec" /><path d="M33 71a19 19 0 0 1 0-38z" fill="#57a55b" /><path d="M-5 33a19 19 0 0 1 38 0z" fill="#f3be42" /></Tile>
);
const Firefox = () => (
  <Tile fill="#20123a">
    <path d="M42 3c-3 6-8 10-8 17 6-3 6 2 9 5 5-4 5-13 2-18 8 8 16 16 15 29a27 27 0 0 1-54-1c0-7 2-12 5-16l2 5 4-4c4 0 8 2 10 6z" fill="url(#gFox)" />
    <circle cx="33" cy="33" r="11" fill="#2b2a7c" /><path d="M13 26c6-3 16 0 18 4-3 1-5 3-8 4-3 6 2 12 9 12 8 0 14-5 15-14 5 14-5 25-17 24S10 42 13 26z" fill="#48b9f5" />
  </Tile>
);
const Cursor = () => (
  <Tile fill="#020202"><path d="M33 10l20 12v22L33 56 13 44V22z" fill="#6c6c6c" /><path d="M33 10l20 12H13z" fill="#454545" /><path d="M13 22h40L33 56V34z" fill="#ececec" /><path d="M13 22v22l20 12V34z" fill="#858585" /><path d="M53 22v22L33 56z" fill="#5a5a5a" /><path d="M13 22h40L33 34z" fill="#fafafa" /></Tile>
);
const Word = () => (
  <Tile fill="#fff"><rect x="18" y="11" width="38" height="44" rx="2.500" fill="#2c60bd" /><path d="M18 22V13q0-2 2-2h34q2 0 2 2v9z" fill="#5fa4ea" /><path d="M18 22h38v11H18z" fill="#3f7ed8" /><path d="M18 44h38v9q0 2-2 2H20q-2 0-2-2z" fill="#23499a" /><rect x="6" y="20" width="26" height="25" rx="2.500" fill="#2552ac" /><text x="19" y="39.500" textAnchor="middle" fill="#fff" fontSize="18" fontWeight="600" fontFamily="Inter, sans-serif">W</text></Tile>
);
const Preview = () => (
  <Tile fill="#eceaea"><rect x="4" y="5" width="58" height="56" rx="10" fill="url(#gSky)" /><path d="M4 35h58v12H4z" fill="#28365c" /><path d="M4 45l16-2 10 4 8 14H14a10 10 0 0 1-10-10z" fill="#d9cfc2" /><path d="M38 45h24l4 18q0 6-5 6H38q-5 0-5-6z" fill="#aab1b8" opacity=".95" stroke="#5f656b" strokeWidth="1.200" /><path d="M42 52l6 3-4 6 8-2 4-6" stroke="#f5f5f5" strokeWidth="3" fill="none" /><rect x="36" y="32" width="28" height="14" rx="3" fill="#18181a" /></Tile>
);
const ChatGPT = () => (
  <span className="flex h-[66px] w-[66px] shrink-0 items-center justify-center rounded-[15px] bg-linear-to-b from-white to-[#dde7f3] text-[#23272c]"><TbBrandOpenai className="h-[60px] w-[60px]" strokeWidth={1.5} /></span>
);

const apps = [
  [Finder, true], [Launchpad], [Safari, true], [Messages, true, '1,240'], [Mail], [Maps], [Photos, true], [FaceTime, false, '9'], [Calendar, true],
  [Contacts], [Reminders, false, '6'], [Notes], [Freeform], [Music], [Tv], [News], [Keynote], [Numbers], [Pages], [AppStore], [Settings, true, '1'], [IPhone], [Feedback],
];
const openApps = [
  [ChromeBeta, true], [Chrome, true], [TextEdit, true], [Stickies, true], [VSCode, true], [GooglePhotos, true], [Firefox, true], [Cursor, true], [Word, true], [Preview, true], [ChatGPT, true],
];

function DockItem({ Icon, running, badge }) {
  return (
    <div className="relative flex w-[85.100px] shrink-0 flex-col items-center">
      <span className="relative">
        <Icon />
        {badge && <Badge wide={badge.length > 2}>{badge}</Badge>}
      </span>
      {running && <span className="mt-[10px] h-[8px] w-[8px] rounded-full bg-[#a2a59c]" />}
    </div>
  );
}

function PdfFile() {
  return (
    <svg className="h-[78px] w-[54px]" viewBox="0 0 54 78">
      <path d="M8 0h38v20H8z" fill="#1e3038" /><path d="M13 0h27v20H13z" fill="#9cc3d9" /><path d="M0 4h35l18 24v50H0z" fill="#f3f3f2" /><path d="M35 4c2 8 2 14 0 24h18z" fill="#d8d8d8" />
      <path d="M5 14h8M5 17h14M5 24h10M5 27h12M5 40h44M5 43h42M5 46h44M5 49h40M5 52h44M5 56h40M5 59h42" stroke="#9a9a9a" strokeWidth="1" />
      <text x="27" y="73" textAnchor="middle" fontSize="11" fill="#666" fontFamily="Inter, sans-serif">PDF</text>
    </svg>
  );
}

function WindowThumb({ bar, side }) {
  return (
    <svg className="h-[78px] w-[66px] overflow-visible" viewBox="0 0 66 78">
      <rect width="66" height="78" fill="#fdfdfd" /><rect width="66" height="5" fill="#f5a9b4" /><rect y="5" width="66" height="5" fill="#f9d3d9" /><rect y="10" width="66" height="4" fill={bar} />
      {side ? (
        <g><rect y="14" width="31" height="64" fill="#f1f1f3" /><path d="M5 21h20M5 28h12M5 33h14M5 38h18M5 43h14M36 21h20M36 26h24M36 31h14M36 37h24M36 42h20M36 48h22M36 54h14M36 60h10" stroke="#a5a5aa" strokeWidth="1.200" /></g>
      ) : (
        <g><path d="M7 16v60" stroke="#dfe3ea" strokeWidth="1" /><rect x="22" y="16" width="7" height="3" fill="#2f72e8" /><path d="M8 24h28M8 31h40M8 37h12M8 40h50M8 43h52M8 46h50M8 49h52M8 52h42M10 62h22M10 66h20M10 70h24" stroke="#a5a5aa" strokeWidth="1.200" /></g>
      )}
      <rect x="44" y="52" width="25" height="25" rx="6" fill="#f4f4f4" /><ChromeMark cx={57} cy={65} r={11} /><path d="M45 58l8-6h7L45 66z" fill="#2d56b4" />
    </svg>
  );
}

function Trash() {
  return (
    <svg className="h-[78px] w-[60px]" viewBox="0 0 60 78">
      <path d="M3 10h54l-6 62q-1 5-6 5H15q-5 0-6-5z" fill="url(#gCan)" />
      <ellipse cx="30" cy="11" rx="28" ry="6" fill="#3c3f41" stroke="#9b9d9e" strokeWidth="1.500" />
      <path d="M8 12l6-9 7 3 5-5 5 8 6-8 8 4 6 8-10 5-12-2-10 2z" fill="#e6e8e8" /><path d="M14 10l7-2 3 8zM36 6l6 8-8 2z" fill="#8c6b52" /><path d="M24 7l6-1 1 6z" fill="#45a89c" />
      <path d="M14 24l3 46M46 24l-3 46" stroke="#9a9d9f" strokeWidth="3" opacity=".5" />
    </svg>
  );
}

function Dock() {
  return (
    <div className="relative ml-[69px] flex h-[104px] w-[3320px] items-start rounded-[30px] border-2 border-[#7b7c70]/60 bg-[linear-gradient(to_right,#1b211a_0%,#231f16_14%,#2a1d13_24%,#20241a_32%,#1b201a_55%,#1d2218_72%,#2c2419_86%,#4b442a_92%,#68622f_96%,#7a7442_100%)] bg-border pl-[3px]">
      <div className="flex pt-[14px]">
        {apps.map(([Icon, running, badge], i) => <DockItem key={i} Icon={Icon} running={running} badge={badge} />)}
      </div>
      <span className="mt-[12px] ml-[20px] h-[76px] w-[2px] bg-[#5d6158]" />
      <div className="ml-[16px] flex pt-[14px]">
        {openApps.map(([Icon, running], i) => <DockItem key={i} Icon={Icon} running={running} />)}
      </div>
      <span className="mt-[12px] ml-[19px] h-[76px] w-[2px] bg-[#7a7460]" />
      <div className="ml-[32px] flex pt-[8px]">
        <PdfFile />
        <span className="ml-[26px]"><WindowThumb bar="#2b6fe2" /></span>
        <span className="ml-[18px]"><WindowThumb bar="#16181d" side /></span>
        <span className="ml-[24px]"><Trash /></span>
      </div>
    </div>
  );
}

/* ---------- Desktop ---------- */

export default function App() {
  return (
    <div className="relative flex h-[2234px] w-[3456px] flex-col overflow-hidden bg-black font-['Inter',sans-serif]">
      <Gradients />
      <div className="absolute inset-x-0 bottom-0 h-[160px] bg-[radial-gradient(ellipse_80px_50px_at_20px_140px,#1c2a14,transparent),radial-gradient(ellipse_140px_30px_at_200px_160px,#141c12,transparent),linear-gradient(to_bottom,transparent_70%,#14110c_95%)]">
        <div className="absolute right-0 bottom-0 left-[350px] h-[12px] bg-[linear-gradient(to_right,#1b120b,#33190e_12%,#3a1c10_22%,#161d10_24%,#1d2415_40%,#10140c_50%,#262c18_60%,#11160d_75%,#4a3019_82%,#16120c_86%)]" />
        <div className="absolute right-0 bottom-0 h-[160px] w-[276px] overflow-hidden bg-[#ece59a]">
          <div className="absolute inset-x-0 top-0 h-[110px] bg-linear-to-b from-black from-40% to-transparent" />
          <p className="absolute top-[62px] left-[196px] font-['Liberation_Sans',sans-serif] text-[25px] leading-[36px] font-bold tracking-[-0.05em] whitespace-nowrap text-[#14140c]">om/nicu</p>
          <p className="absolute top-[147px] left-[23px] font-['Liberation_Sans',sans-serif] text-[25px] leading-[32px] font-bold tracking-[-0.05em] whitespace-nowrap text-[#14140c]">git clone [https://github</p>
        </div>
      </div>
      <MenuBar />
      <div className="relative mt-[2px] flex h-[2038px] shrink-0 flex-col overflow-hidden rounded-t-[20px] rounded-b-[26px] border-t-2 border-[#6d6c72]">
        <TabStrip />
        <NavBar />
        <BookmarkBar />
        <PreviewBanner />
        <Page />
      </div>
      <div className="mt-[6px] shrink-0">
        <Dock />
      </div>
    </div>
  );
}
